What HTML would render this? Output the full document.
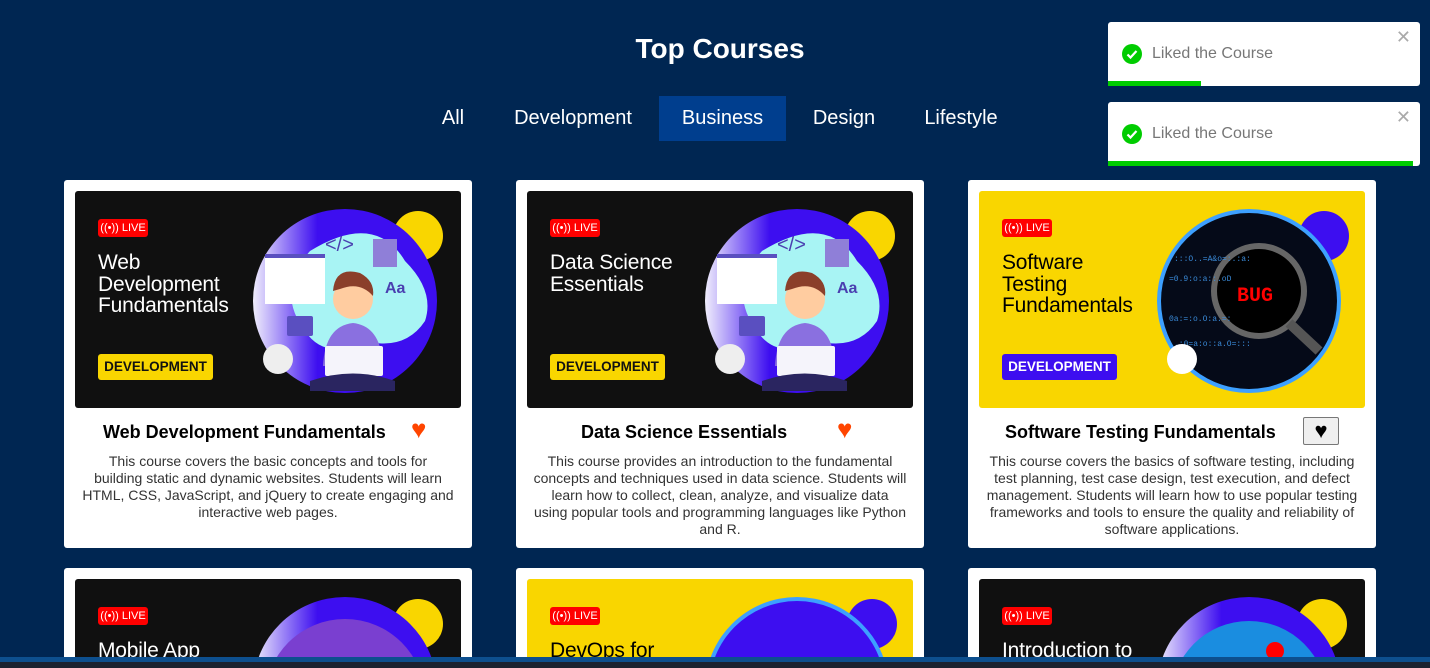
<!DOCTYPE html>
<html><head><meta charset="utf-8"><style>
*{box-sizing:border-box;margin:0;padding:0}
html,body{width:1430px;height:668px;overflow:hidden}
body{background:#002652;font-family:"Liberation Sans",Arial,sans-serif}
#wrap{position:relative;width:1430px;height:668px;overflow:hidden}
h1{position:absolute;left:0;width:1440px;top:33px;text-align:center;color:#fff;font-size:28px;font-weight:bold}
.tab{position:absolute;top:96px;height:45px;line-height:45px;color:#fff;font-size:20px;text-align:center}
.card{position:absolute;width:408px;height:368px;background:#fff;border-radius:3px;overflow:hidden}
.img{position:absolute;left:11px;top:11px;width:386px;height:217px;border-radius:3px;overflow:hidden}
.live{position:absolute;left:23px;top:28px;width:50px;height:18px;background:#f00;border-radius:3px;color:#fff;font-size:11px;line-height:18px;text-align:center}
.ttl{position:absolute;left:23px;top:61px;font-size:21px;line-height:21.5px;color:#fff;letter-spacing:-.2px}
.badge{position:absolute;left:23px;top:163px;width:115px;height:26px;border-radius:3px;font-size:13.5px;font-weight:bold;line-height:26px;text-align:center;background:#f9d600;color:#111}
.ct{position:absolute;top:242px;font-size:18px;font-weight:bold;color:#000}
.heart{position:absolute;top:236px;color:#ff4500;font-size:26px;line-height:26px}
.desc{position:absolute;left:17px;right:17px;top:273px;text-align:center;font-size:14px;line-height:17px;color:#333}
.toast{position:absolute;left:1108px;width:312px;background:#fff;border-radius:3px;height:64px}
.toast .ck{position:absolute;left:14px;top:22px;width:20px;height:20px;border-radius:50%;background:#0c0}
.toast .tx{position:absolute;left:44px;top:23px;font-size:16px;color:#777}
.toast .x{position:absolute;right:9px;top:5px;font-size:18px;color:#aaa}
.toast .bar{position:absolute;left:0;bottom:0;height:5px;background:#0c0}
</style></head><body><div id="wrap">
<h1>Top Courses</h1>
<div class="tab" style="left:430px;width:46px">All</div>
<div class="tab" style="left:500px;width:146px">Development</div>
<div class="tab" style="left:659px;width:127px;background:#003e8e">Business</div>
<div class="tab" style="left:800px;width:88px">Design</div>
<div class="tab" style="left:912px;width:98px">Lifestyle</div>

<div class="toast" style="top:22px"><div class="ck"><svg width="20" height="20"><path d="M5.5 10.5l3 3 6-6.5" stroke="#fff" stroke-width="2.2" fill="none"/></svg></div><div class="tx">Liked the Course</div><div class="x">✕</div><div class="bar" style="width:93px"></div></div>
<div class="toast" style="top:102px"><div class="ck"><svg width="20" height="20"><path d="M5.5 10.5l3 3 6-6.5" stroke="#fff" stroke-width="2.2" fill="none"/></svg></div><div class="tx">Liked the Course</div><div class="x">✕</div><div class="bar" style="width:305px"></div></div>

<svg width="0" height="0" style="position:absolute"><defs>
<linearGradient id="g1" x1="0" x2="1"><stop offset="0" stop-color="#f0eefc"/><stop offset=".35" stop-color="#3d0ef0"/><stop offset="1" stop-color="#3d0ef0"/></linearGradient>
<g id="dev">
<circle cx="343" cy="45" r="25" fill="#f9d600"/>
<circle cx="270" cy="110" r="92" fill="url(#g1)"/>
<path d="M235 60 Q300 20 330 70 Q360 100 350 130 Q330 160 290 150 Q250 170 230 140 Q200 100 235 60Z" fill="#a8f4f4"/>
<rect x="190" y="63" width="60" height="50" fill="#fff"/><rect x="190" y="63" width="60" height="4" fill="#5a4fc0"/>
<rect x="298" y="48" width="24" height="28" fill="#8f7fd8"/>
<text x="250" y="60" font-size="20" fill="#4a3fb0" font-family="Liberation Sans">&lt;/&gt;</text>
<text x="310" y="102" font-size="16" font-weight="bold" fill="#4a3fb0" font-family="Liberation Sans">Aa</text>
<rect x="212" y="125" width="26" height="20" rx="2" fill="#5a4fc0"/>
<circle cx="278" cy="108" r="20" fill="#ffcca0"/><path d="M258 100 Q260 75 285 82 Q300 90 298 105 Q285 90 265 98Z" fill="#8b3f2a"/>
<path d="M248 175 Q250 135 278 132 Q306 135 308 175Z" fill="#8a70e0"/>
<rect x="250" y="155" width="58" height="30" rx="2" fill="#f5f4fb"/>
<path d="M235 190 Q278 175 320 190 L320 200 L235 200Z" fill="#2a2560"/>
<circle cx="203" cy="168" r="15" fill="#eee"/>
</g>
<g id="bug">
<circle cx="345" cy="45" r="25" fill="#3d0ef0"/>
<circle cx="270" cy="110" r="92" fill="#3da0ff"/>
<circle cx="270" cy="110" r="88" fill="#050a18"/>
<circle cx="280" cy="100" r="45" fill="#000" stroke="#666" stroke-width="6"/>
<path d="M310 132 L340 160" stroke="#555" stroke-width="10"/>
<text x="258" y="110" font-size="20" font-weight="bold" fill="#f00" font-family="Liberation Mono">BUG</text>
<text x="195" y="70" font-size="8" fill="#3a8ad8" font-family="Liberation Mono">:::O..=A&amp;o=:.:a:</text>
<text x="190" y="90" font-size="8" fill="#3a8ad8" font-family="Liberation Mono">=0.9:o:a::.oD</text>
<text x="190" y="130" font-size="8" fill="#3a8ad8" font-family="Liberation Mono">0a:=:o.O:a.=:</text>
<text x="195" y="155" font-size="8" fill="#3a8ad8" font-family="Liberation Mono">.:0=a:o::a.O=:::</text>
<circle cx="203" cy="168" r="15" fill="#fff"/>
</g>
</defs></svg>

<div class="card" style="left:64px;top:180px"><div class="img" style="background:#101010"><svg width="386" height="217" style="position:absolute"><use href="#dev"/></svg><div class="live">((•)) LIVE</div><div class="ttl">Web<br>Development<br>Fundamentals</div><div class="badge">DEVELOPMENT</div></div>
<div class="ct" style="left:39px">Web Development Fundamentals</div><div class="heart" style="left:347px">♥</div>
<div class="desc" style="left:5px;right:5px;white-space:nowrap">This course covers the basic concepts and tools for<br>building static and dynamic websites. Students will learn<br>HTML, CSS, JavaScript, and jQuery to create engaging and<br>interactive web pages.</div></div>

<div class="card" style="left:516px;top:180px"><div class="img" style="background:#101010"><svg width="386" height="217" style="position:absolute"><use href="#dev"/></svg><div class="live">((•)) LIVE</div><div class="ttl">Data Science<br>Essentials</div><div class="badge">DEVELOPMENT</div></div>
<div class="ct" style="left:65px">Data Science Essentials</div><div class="heart" style="left:321px">♥</div>
<div class="desc">This course provides an introduction to the fundamental concepts and techniques used in data science. Students will learn how to collect, clean, analyze, and visualize data using popular tools and programming languages like Python and R.</div></div>

<div class="card" style="left:968px;top:180px"><div class="img" style="background:#f9d600"><svg width="386" height="217" style="position:absolute"><use href="#bug"/></svg><div class="live">((•)) LIVE</div><div class="ttl" style="color:#000">Software<br>Testing<br>Fundamentals</div><div class="badge" style="background:#3d0ef0;color:#fff">DEVELOPMENT</div></div>
<div class="ct" style="left:37px">Software Testing Fundamentals</div><div style="position:absolute;left:335px;top:237px;width:36px;height:28px;border:1px solid #777;border-radius:2px;background:#efefef;text-align:center;font-size:22px;line-height:26px;color:#000">♥</div>
<div class="desc" style="left:10px;right:10px">This course covers the basics of software testing, including test planning, test case design, test execution, and defect management. Students will learn how to use popular testing frameworks and tools to ensure the quality and reliability of software applications.</div></div>

<div class="card" style="left:64px;top:568px;height:100px"><div class="img" style="background:#101010"><svg width="386" height="217" style="position:absolute"><circle cx="343" cy="45" r="25" fill="#f9d600"/><circle cx="270" cy="110" r="92" fill="url(#g1)"/><circle cx="270" cy="120" r="80" fill="#7a3fd0"/></svg><div class="live">((•)) LIVE</div><div class="ttl">Mobile App</div></div></div>
<div class="card" style="left:516px;top:568px;height:100px"><div class="img" style="background:#f9d600"><svg width="386" height="217" style="position:absolute"><circle cx="345" cy="45" r="25" fill="#3d0ef0"/><circle cx="270" cy="110" r="92" fill="#3da0ff"/><circle cx="270" cy="110" r="88" fill="#3d0ef0"/></svg><div class="live">((•)) LIVE</div><div class="ttl" style="color:#000">DevOps for</div></div></div>
<div class="card" style="left:968px;top:568px;height:100px"><div class="img" style="background:#101010"><svg width="386" height="217" style="position:absolute"><circle cx="343" cy="45" r="25" fill="#f9d600"/><circle cx="270" cy="110" r="92" fill="url(#g1)"/><circle cx="270" cy="120" r="78" fill="#1a8de0"/><circle cx="296" cy="72" r="9" fill="#f00"/></svg><div class="live">((•)) LIVE</div><div class="ttl">Introduction to</div></div></div>

<div style="position:absolute;left:0;top:657px;width:1430px;height:5px;background:#0d4f8e"></div>
<div style="position:absolute;left:0;top:662px;width:1430px;height:6px;background:#1b2230"></div>
</div></body></html>
